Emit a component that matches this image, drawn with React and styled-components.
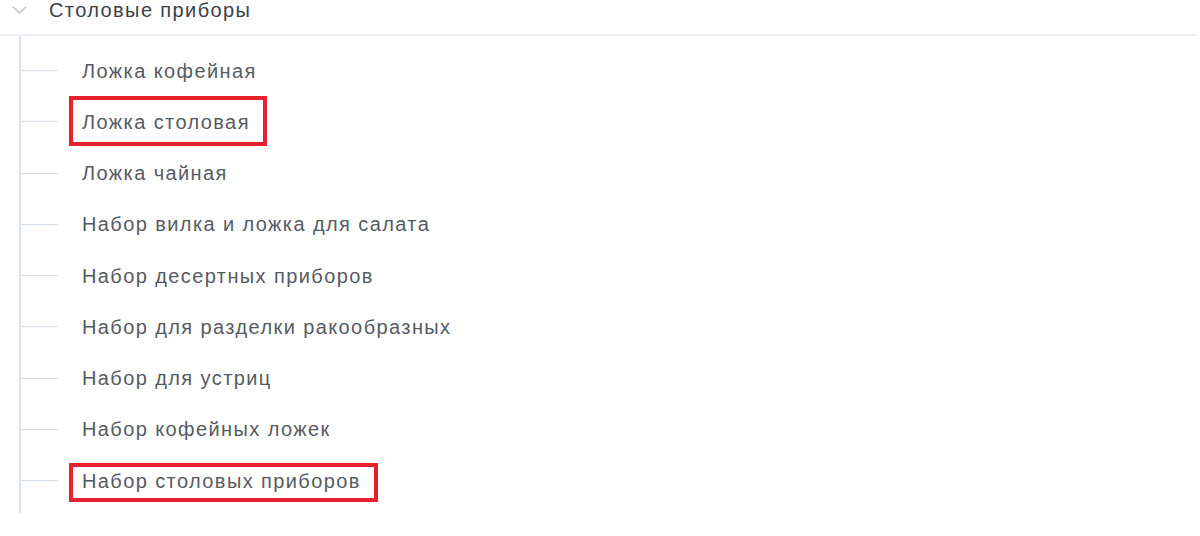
import React from 'react';
import styled, { createGlobalStyle } from 'styled-components';

const GlobalStyle = createGlobalStyle`
  html, body {
    margin: 0;
    padding: 0;
    background: #ffffff;
  }
  body {
    font-family: 'Liberation Sans', Arial, sans-serif;
  }
`;

const Page = styled.div`
  width: 1200px;
  height: 536px;
  overflow: hidden;
  background: #ffffff;
`;

const GroupHeader = styled.div`
  display: flex;
  align-items: center;
  height: 20px;
  padding: 0 3px 14px 11px;
  border-bottom: 2px solid #eef0f5;
  gap: 21px;
  width: 1183px;
`;

const Chevron = styled.svg`
  width: 17px;
  height: 10px;
  flex: none;
  margin-top: -1px;
`;

const GroupTitle = styled.span`
  font-size: 20px;
  color: #3b4049;
  letter-spacing: 1.4px;
  line-height: 20px;
`;

const Tree = styled.ul`
  list-style: none;
  margin: 0 0 0 19px;
  padding: 9px 0 7px 0;
  border-left: 2px solid #dde4ee;
  width: 400px;
`;

const Item = styled.li`
  display: flex;
  align-items: center;
  height: 51.25px;
`;

const Connector = styled.span`
  width: 37px;
  height: 1px;
  background: #d6dde8;
  flex: none;
  margin-right: 24px;
`;

const Label = styled.span`
  position: relative;
  font-size: 20px;
  color: #565b62;
  letter-spacing: 1.4px;
  white-space: nowrap;
  line-height: 20px;
`;

const Mark = styled.span`
  position: absolute;
  left: -13px;
  right: -17px;
  top: ${({ $top }) => $top}px;
  bottom: ${({ $bottom }) => $bottom}px;
  border: 4px solid #e8202e;
  pointer-events: none;
`;

const items = [
  { name: 'Ложка кофейная' },
  { name: 'Ложка столовая', mark: { top: -16, bottom: -14 } },
  { name: 'Ложка чайная' },
  { name: 'Набор вилка и ложка для салата' },
  { name: 'Набор десертных приборов' },
  { name: 'Набор для разделки ракообразных' },
  { name: 'Набор для устриц' },
  { name: 'Набор кофейных ложек' },
  { name: 'Набор столовых приборов', mark: { top: -8, bottom: -11 } },
];

export default function App() {
  return (
    <Page>
      <GlobalStyle />
      <GroupHeader>
        <Chevron viewBox="0 0 17 10">
          <path d="M2 2 L8.5 8 L15 2" fill="none" stroke="#c3c8d0" strokeWidth="1.6" strokeLinecap="round" strokeLinejoin="round" />
        </Chevron>
        <GroupTitle>Столовые приборы</GroupTitle>
      </GroupHeader>
      <Tree>
        {items.map((it) => (
          <Item key={it.name}>
            <Connector />
            <Label>
              {it.name}
              {it.mark && <Mark $top={it.mark.top} $bottom={it.mark.bottom} />}
            </Label>
          </Item>
        ))}
      </Tree>
    </Page>
  );
}
